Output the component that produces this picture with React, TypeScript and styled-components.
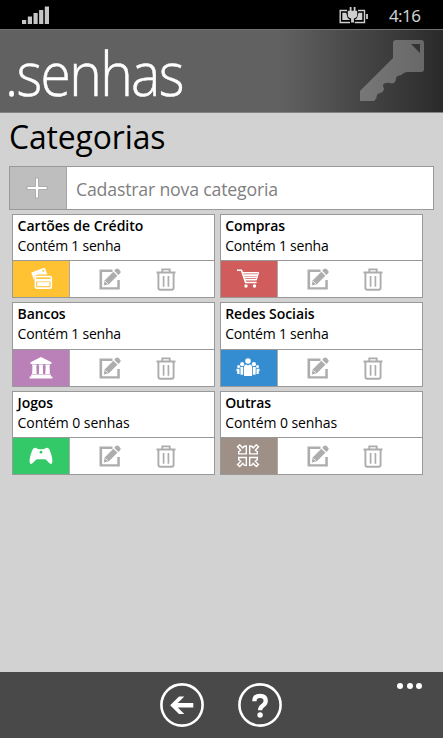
import React from 'react';
import styled, { createGlobalStyle } from 'styled-components';

const GlobalStyle = createGlobalStyle`
  * { box-sizing: border-box; }
  body { margin: 0; background: #d2d2d2; }
`;

const Screen = styled.div`
  width: 443px;
  height: 738px;
  display: flex;
  flex-direction: column;
  overflow: hidden;
  background: #d2d2d2;
  color: #000;
  font-family: 'Open Sans', 'Noto Sans', sans-serif;
`;

const StatusBar = styled.div`
  height: 29px;
  flex: none;
  display: flex;
  align-items: center;
  padding: 0 22px;
  background: #000;
  color: #cfcfcf;
`;

const BatteryIcon = styled.svg`
  margin-left: auto;
`;

const Clock = styled.time`
  margin-left: 20px;
  width: 32px;
  white-space: nowrap;
  font-family: 'Noto Sans', sans-serif;
  font-size: 17px;
  line-height: 20px;
  letter-spacing: -0.6px;
  padding-top: 3px;
`;

const Banner = styled.header`
  height: 84px;
  flex: none;
  display: flex;
  justify-content: space-between;
  border-top: 1px solid #727272;
  border-bottom: 1px solid #828282;
  background: linear-gradient(90deg, #616161 0, #616161 280px, #2a2a2a 443px);
`;

const Logo = styled.div`
  padding: 3px 0 0 5px;
  white-space: nowrap;
  color: #fff;
  font-size: 60px;
  font-weight: 300;
  line-height: 80px;
  letter-spacing: -1.8px;
  -webkit-text-stroke: 0.5px #fff;
  transform: scaleX(0.92);
  transform-origin: 5px 0;
`;

const KeyIcon = styled.svg`
  margin: 9px 17px 0 0;
`;

const Content = styled.main`
  flex: 1;
  padding: 0 9px;
`;

const Title = styled.h1`
  margin: 0;
  height: 53px;
  white-space: nowrap;
  font-size: 33px;
  font-weight: 400;
  line-height: 48px;
  letter-spacing: -0.1px;
  transform: scaleX(0.965);
  transform-origin: 0 0;
`;

const AddRow = styled.div`
  width: 425px;
  height: 44px;
  display: flex;
  border: 1px solid #999;
  background: #fff;
`;

const AddButton = styled.button`
  width: 57px;
  padding: 0 2px 0 0;
  display: grid;
  place-items: center;
  border: 0;
  border-right: 1px solid #a4a4a4;
  background: #bebebe;
`;

const Placeholder = styled.div`
  padding-left: 9px;
  white-space: nowrap;
  color: #808080;
  font-size: 18.5px;
  line-height: 43px;
  letter-spacing: -0.2px;
  transform: scaleX(0.957);
  transform-origin: 9px 0;
`;

const Cards = styled.div`
  display: grid;
  grid-template-columns: 203px 203px;
  grid-template-rows: 84px 85px 84px;
  gap: 4px 4.6px;
  padding: 4px 0 0 3px;
`;

const Card = styled.section`
  display: flex;
  flex-direction: column;
  border: 1px solid #999;
  background: #fff;
`;

const CardText = styled.div`
  flex: 1;
  padding: 1px 0 0 4.6px;
  white-space: nowrap;
  font-size: 14px;
  line-height: 20px;
`;

const CardName = styled.div<{ $track: number }>`
  font-weight: 600;
  letter-spacing: ${(p) => p.$track}px;
`;

const CardCount = styled.div<{ $track: number }>`
  letter-spacing: ${(p) => p.$track}px;
`;

const CardActions = styled.div`
  height: 37px;
  flex: none;
  display: flex;
  border-top: 1px solid #999;
`;

const Tile = styled.div<{ $color: string }>`
  width: 57px;
  padding-right: 1px;
  display: grid;
  place-items: center;
  border-right: 1px solid #aaa;
  background: ${(p) => p.$color};
`;

const Tools = styled.div`
  display: flex;
  align-items: center;
  gap: 34.5px;
  padding-left: 29px;
`;

const AppBar = styled.footer`
  height: 66px;
  flex: none;
  display: grid;
  grid-template-columns: 1fr auto 1fr;
  background: #494949;
`;

const BarButtons = styled.nav`
  grid-column: 2;
  display: flex;
  gap: 34px;
  padding: 11px 1.5px 0 0;
`;

const More = styled.div`
  display: flex;
  justify-content: flex-end;
  gap: 3.4px;
  padding: 11px 21px 0 0;
`;

const Dot = styled.i`
  width: 6px;
  height: 6px;
  border-radius: 50%;
  background: #fff;
`;

const EditIcon = () => (
  <svg width="22" height="22" viewBox="0 0 22 22" fill="#adadad">
    <path d="M.5 1.500h13v2.400H3.100v15.300h15.200V12h2.500v9.600H.5z" />
    <path d="M5.800 12.200 14.300 3.700l4.100 4.100-8.500 8.500-5.200 1.200z" />
    <path d="m15.200 2.800 1.500-1.500a2.200 2.200 0 0 1 3 0l1.200 1.200a2.200 2.200 0 0 1 0 3l-1.500 1.500z" />
    <path d="m6.300 13.400 2.400 2.300" stroke="#fff" strokeWidth="0.900" />
  </svg>
);

const TrashIcon = () => (
  <svg width="20" height="23" viewBox="0 0 20 23" fill="none" stroke="#adadad" strokeWidth="1.900">
    <path d="M0.500 4.500h19M6.300 4V1.400h7.400V4M2.400 5v14.700a2 2 0 0 0 2 2h11.200a2 2 0 0 0 2-2V5" />
    <path d="M7.600 8v10.700M12.400 8v10.700" strokeWidth="1.700" />
  </svg>
);

const CardsIcon = () => (
  <svg width="24" height="24" viewBox="0 0 24 24">
    <path
      d="M2.300 5.400 14.500 1q1.400-.4 1.800.8l1.900 5.800H9.300q-3.700 0-3.900 3.600L5.300 14z"
      fill="#fff"
    />
    <circle cx="14.300" cy="3.800" r="1" fill="#ffc233" />
    <rect x="5.600" y="8.800" width="17.500" height="13.200" rx="2" fill="#fff" />
    <rect x="7.200" y="10.400" width="14.300" height="1.500" fill="#ffc233" />
    <rect x="7.200" y="14.600" width="14.300" height="5.700" rx="0.700" fill="#ffc233" />
    <rect x="8.200" y="15.200" width="12.300" height="4" fill="#fff" />
  </svg>
);

const CartIcon = () => (
  <svg width="24" height="24" viewBox="0 0 24 24" fill="none" stroke="#fff">
    <path d="M1 3.200h4.500l4.100 12.300h11" strokeWidth="1.600" />
    <path d="M6.800 5.700h16M7.600 8.100h14.500M8.300 10.400h13M9 12.700h11.600" strokeWidth="1.600" />
    <path d="M22.600 5.500 20.300 13" strokeWidth="1" />
    <g fill="#fff" stroke="none">
      <circle cx="10" cy="19" r="1.700" />
      <circle cx="18.500" cy="19" r="1.700" />
    </g>
  </svg>
);

const BankIcon = () => (
  <svg width="24" height="24" viewBox="0 0 24 24" fill="#fff">
    <path d="m12 1 10.500 5.300v1.600h-21V6.300zM3 8.400h4.800v1.400H7.300l.4 8.300H3.100l.4-8.300H3zM9.700 8.400h4.600v1.400h-.5l.3 8.300H9.900l.3-8.300h-.5zM16.200 8.400H21v1.400h-.5l.4 8.300h-4.600l.4-8.300h-.5zM2.200 18.500h19.600v2H2.200zM.6 20.400h22.800v2.200H.6z" />
  </svg>
);

const PeopleIcon = () => (
  <svg width="24" height="24" viewBox="0 0 24 24" fill="#fff">
    <circle cx="12" cy="5" r="2.800" />
    <path d="M8 20v-8.500Q8 8.600 10.500 8.600L12 9.500l1.500-.9q2.600 0 2.600 2.900V20z" />
    <circle cx="6.200" cy="8.200" r="2.100" />
    <path d="M4.300 11.100h2.900V18.800H4.500v-5.200z" />
    <circle cx="17.900" cy="8.200" r="2.100" />
    <path d="M16.900 11.100h2.900l-.2 7.700h-2.700z" />
    <circle cx="2.600" cy="10.500" r="1.500" />
    <path d="M.5 12.800h3v5.100H1.300v-2.200L.5 15z" />
    <circle cx="21.500" cy="10.500" r="1.500" />
    <path d="M20.500 12.800h3V15l-.8.700v2.200h-2.200z" />
  </svg>
);

const GamepadIcon = () => (
  <svg width="24" height="24" viewBox="0 0 24 24">
    <path
      d="M6.300 3.700 9 5q3 .5 6 0l2.700-1.300q2.500.1 3.700 4.300 1.800 4.500 2 8 .1 3.900-1.400 3.900-1.300 0-3.300-2.300-1.700-2.300-3-2.300H8.300q-1.300 0-3 2.300Q3.300 19.900 2 19.900.5 19.900.600 16q.2-3.500 2-8Q3.800 3.800 6.300 3.700z"
      fill="#fff"
    />
    <circle cx="12" cy="8.200" r="1.400" fill="#34c968" />
  </svg>
);

const arrow = 'M1.500 2.800 3.700.8l3.100 3.200L8.200 2.200 10.300 2v7.900H2.700V7.800l2-1.600z';

const ConvergeIcon = () => (
  <svg width="24" height="24" viewBox="0 0 24 24" fill="none" stroke="#fff" strokeWidth="1.400">
    <path d={arrow} />
    <path d={arrow} transform="matrix(-1 0 0 1 24 0)" />
    <path d={arrow} transform="matrix(1 0 0 -1 0 23.400)" />
    <path d={arrow} transform="matrix(-1 0 0 -1 24 23.400)" />
  </svg>
);

const categories = [
  { name: 'Cartões de Crédito', count: 'Contém 1 senha', color: '#ffc233', track: 0, countTrack: -0.22, Icon: CardsIcon },
  { name: 'Compras', count: 'Contém 1 senha', color: '#d05c5c', track: -0.1, countTrack: -0.22, Icon: CartIcon },
  { name: 'Bancos', count: 'Contém 1 senha', color: '#b981b8', track: -0.1, countTrack: -0.22, Icon: BankIcon },
  { name: 'Redes Sociais', count: 'Contém 1 senha', color: '#348dd0', track: -0.06, countTrack: -0.22, Icon: PeopleIcon },
  { name: 'Jogos', count: 'Contém 0 senhas', color: '#34c968', track: -0.1, countTrack: -0.08, Icon: GamepadIcon },
  { name: 'Outras', count: 'Contém 0 senhas', color: '#9e8f87', track: -0.1, countTrack: -0.08, Icon: ConvergeIcon },
];

export default function App() {
  return (
    <>
      <GlobalStyle />
      <Screen>
        <StatusBar>
          <svg width="28" height="18" viewBox="0 0 28 18" fill="#c6c6c6">
            <path d="M0 14h4.200v4H0zM5.800 10.500H10V18H5.800zM11.500 7h4.200v11h-4.200zM17.100 4h4.200v14h-4.200zM22.800.5H27V18h-4.200z" />
          </svg>
          <BatteryIcon width="30" height="18" viewBox="0 0 30 18" fill="none" stroke="#cfcfcf" strokeWidth="1.400">
            <path d="M8 4.500H1.200v12H11M19 4.500h6.500v12h-9.800" />
            <path d="M3.300 6.800h3.900l1.500 5.300 2.500 2H3.300zM23.300 6.800h-3.800L18 12.100l-2.500 2h7.800z" fill="#cfcfcf" stroke="none" />
            <path d="M8.800 4.800h9.400v4.200q0 3-3.300 3.400v4.100h-2.800v-4.100q-3.300-.4-3.300-3.400z" fill="#cfcfcf" stroke="none" />
            <path d="M11.600 1v4.500M15.600 1v4.500M28 8v5" strokeWidth="1.800" />
          </BatteryIcon>
          <Clock>4:16</Clock>
        </StatusBar>
        <Banner>
          <Logo>.senhas</Logo>
          <KeyIcon width="67" height="64" viewBox="0 0 67 64">
            <defs>
              <linearGradient id="keyShade" x1="0" x2="1">
                <stop offset="0" stopColor="#777" />
                <stop offset="1" stopColor="#686868" />
              </linearGradient>
            </defs>
            <path
              fill="url(#keyShade)"
              fillRule="evenodd"
              d="M37 1h25q3 0 3 3v26q0 3-3 3H48q-2 0-4 1.500-1.500 2-4 2-3 .500-3 3.500-.5 4-4 4.500-5-1.500-8 0-2 2 0 5-.5 4-4 4.500-4 1-3.500 5L15 62H1V52L34 19V4q0-3 3-3zM52 5l9 9V5z"
            />
          </KeyIcon>
        </Banner>
        <Content>
          <Title>Categorias</Title>
          <AddRow>
            <AddButton aria-label="Adicionar">
              <svg width="22" height="22" viewBox="0 0 22 22">
                <path d="M9.500 1h3v8.500H21v3h-8.500V21h-3v-8.500H1v-3h8.500z" fill="#fff" stroke="#999" strokeWidth="0.700" />
              </svg>
            </AddButton>
            <Placeholder>Cadastrar nova categoria</Placeholder>
          </AddRow>
          <Cards>
            {categories.map(({ name, count, color, track, countTrack, Icon }) => (
              <Card key={name}>
                <CardText>
                  <CardName $track={track}>{name}</CardName>
                  <CardCount $track={countTrack}>{count}</CardCount>
                </CardText>
                <CardActions>
                  <Tile $color={color}>
                    <Icon />
                  </Tile>
                  <Tools>
                    <EditIcon />
                    <TrashIcon />
                  </Tools>
                </CardActions>
              </Card>
            ))}
          </Cards>
        </Content>
        <AppBar>
          <BarButtons>
            <svg width="44" height="44" viewBox="0 0 44 44" fill="none" stroke="#fff">
              <circle cx="22" cy="22" r="20.600" strokeWidth="2.600" />
              <path d="M10.200 22.300 19 13.400h5.300l-6.500 6.500h15.500v4.700H17.800l6.500 6.500H19z" fill="#fff" stroke="none" />
            </svg>
            <svg width="44" height="44" viewBox="0 0 44 44" fill="none" stroke="#fff">
              <circle cx="22" cy="22" r="20.600" strokeWidth="2.600" />
              <path d="M16.400 18.200q0-5.400 5.600-5.400 5.700 0 5.700 5 0 2.800-3 4.900-2.600 1.900-2.600 4.500" strokeWidth="4.300" />
              <circle cx="22.100" cy="32" r="2.700" fill="#fff" stroke="none" />
            </svg>
          </BarButtons>
          <More>
            <Dot />
            <Dot />
            <Dot />
          </More>
        </AppBar>
      </Screen>
    </>
  );
}
